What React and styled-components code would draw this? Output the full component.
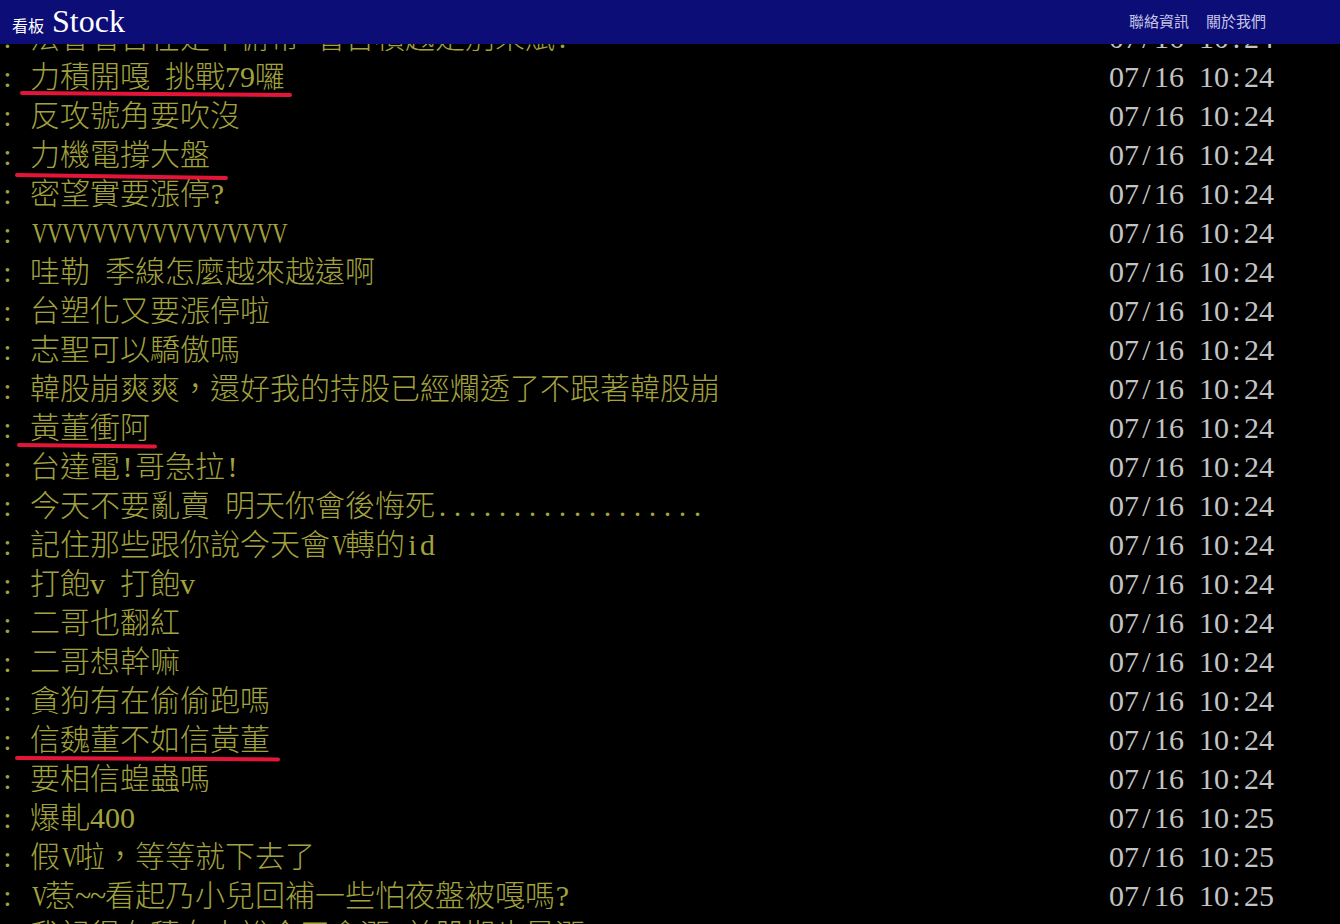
import React from "react";
import styled, { createGlobalStyle } from "styled-components";

const GlobalStyle = createGlobalStyle`
  html, body {
    margin: 0;
    padding: 0;
    background: #000;
    overflow: hidden;
  }
  body {
    font-family: "Liberation Serif", "Noto Sans CJK TC", serif;
    color: #c0c0c0;
  }
`;

const TopBar = styled.header`
  position: fixed;
  top: 0;
  left: 0;
  right: 0;
  z-index: 10;
  height: 44px;
  box-sizing: border-box;
  background: #0d0d78;
  display: flex;
  align-items: center;
  justify-content: space-between;
  padding: 0 74px 0 12px;
`;

const BoardTitle = styled.a`
  display: flex;
  align-items: baseline;
  gap: 8px;
  color: #fff;
  text-decoration: none;
  padding-bottom: 3px;
`;

const BoardLabel = styled.span`
  font-family: "Noto Sans CJK TC", sans-serif;
  font-size: 16px;
`;

const BoardName = styled.span`
  font-family: "Liberation Serif", serif;
  font-size: 32px;
  line-height: 1;
`;

const NavLinks = styled.nav`
  display: flex;
  gap: 17px;
  padding-bottom: 4px;
`;

const NavLink = styled.a`
  font-family: "Noto Sans CJK TC", sans-serif;
  font-size: 15px;
  color: #c6c6e6;
  text-decoration: none;
`;

const Screen = styled.main`
  padding-top: 18px;
`;

const PushRow = styled.div`
  position: relative;
  display: flex;
  height: 39px;
  line-height: 39px;
  font-size: 30px;
  white-space: nowrap;
  padding-right: 66px;
`;

const PushContent = styled.span`
  color: #a2a23e;
  font-family: "Liberation Serif", "Noto Sans CJK TC", serif;
  font-weight: 300;
`;

const PushTime = styled.span`
  margin-left: auto;
  color: #c4c4c4;
`;

/* one half-width terminal cell, as the BBS font draws Latin characters */
const Half = styled.span`
  display: inline-block;
  width: 0.5em;
  text-align: center;
  font-family: "Liberation Serif", serif;
  font-weight: 400;
  transform: ${(p) => (p.$squeeze ? "scaleX(0.72)" : "none")};
`;

const Scribble = styled.span`
  position: absolute;
  left: ${(p) => p.$left}px;
  width: ${(p) => p.$width}px;
  top: ${(p) => p.$top}px;
  height: 4px;
  border-radius: 2px;
  background: #e3163a;
  transform-origin: left center;
  transform: rotate(${(p) => p.$tilt}deg);
`;

const Cells = ({ text }) => {
  const out = [];
  let run = "";
  [...text].forEach((ch, i) => {
    if (ch.charCodeAt(0) < 0x2000) {
      if (run) {
        out.push(run);
        run = "";
      }
      out.push(
        <Half key={i} $squeeze={/[A-Z]/.test(ch)}>
          {ch}
        </Half>
      );
    } else {
      run += ch;
    }
  });
  if (run) out.push(run);
  return <>{out}</>;
};

const pushes = [
  { text: "法會看台在是不俯帶 看台積越是別來賦!", time: "07/16 10:24" },
  { text: "力積開嘎 挑戰79囉", time: "07/16 10:24", mark: { left: 20, width: 272, top: 34, tilt: 0.4 } },
  { text: "反攻號角要吹沒", time: "07/16 10:24" },
  { text: "力機電撐大盤", time: "07/16 10:24", mark: { left: 15, width: 213, top: 38, tilt: 0.8 } },
  { text: "密望實要漲停?", time: "07/16 10:24" },
  { text: "VVVVVVVVVVVVVVVVV", time: "07/16 10:24" },
  { text: "哇勒 季線怎麼越來越遠啊", time: "07/16 10:24" },
  { text: "台塑化又要漲停啦", time: "07/16 10:24" },
  { text: "志聖可以驕傲嗎", time: "07/16 10:24" },
  { text: "韓股崩爽爽，還好我的持股已經爛透了不跟著韓股崩", time: "07/16 10:24" },
  { text: "黃董衝阿", time: "07/16 10:24", mark: { left: 17, width: 140, top: 35, tilt: 0.6 } },
  { text: "台達電!哥急拉!", time: "07/16 10:24" },
  { text: "今天不要亂賣 明天你會後悔死..................", time: "07/16 10:24" },
  { text: "記住那些跟你說今天會V轉的id", time: "07/16 10:24" },
  { text: "打飽v 打飽v", time: "07/16 10:24" },
  { text: "二哥也翻紅", time: "07/16 10:24" },
  { text: "二哥想幹嘛", time: "07/16 10:24" },
  { text: "貪狗有在偷偷跑嗎", time: "07/16 10:24" },
  { text: "信魏董不如信黃董", time: "07/16 10:24", mark: { left: 15, width: 265, top: 36, tilt: 0.3 } },
  { text: "要相信蝗蟲嗎", time: "07/16 10:24" },
  { text: "爆軋400", time: "07/16 10:25" },
  { text: "假V啦，等等就下去了", time: "07/16 10:25" },
  { text: "V惹~~看起乃小兒回補一些怕夜盤被嘎嗎?", time: "07/16 10:25" },
  { text: "我記得有積女士說今天會漲 美股期也是漲", time: "07/16 10:25" },
];

export default function App() {
  return (
    <>
      <GlobalStyle />
      <TopBar>
        <BoardTitle href="#">
          <BoardLabel>看板</BoardLabel>
          <BoardName>Stock</BoardName>
        </BoardTitle>
        <NavLinks>
          <NavLink href="#">聯絡資訊</NavLink>
          <NavLink href="#">關於我們</NavLink>
        </NavLinks>
      </TopBar>
      <Screen>
        {pushes.map((p, i) => (
          <PushRow key={i}>
            <PushContent>
              <Cells text={": " + p.text} />
            </PushContent>
            <PushTime>
              <Cells text={p.time} />
            </PushTime>
            {p.mark && (
              <Scribble
                $left={p.mark.left}
                $width={p.mark.width}
                $top={p.mark.top}
                $tilt={p.mark.tilt}
              />
            )}
          </PushRow>
        ))}
      </Screen>
    </>
  );
}
